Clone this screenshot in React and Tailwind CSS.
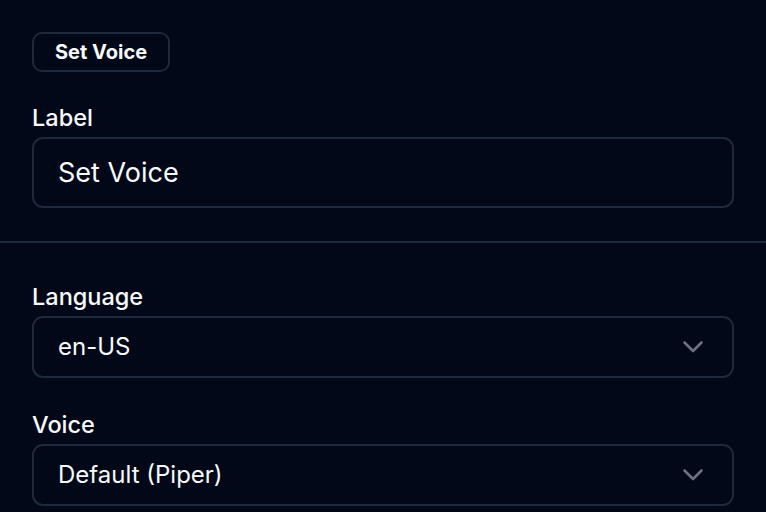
import React from 'react';

const Chevron = () => (
    <svg width="22" height="14" viewBox="0 0 22 14" fill="none" className="shrink-0">
        <path d="M2.5 2.5 11 11l8.5-8.5" stroke="#6b7280" strokeWidth="2.6" strokeLinecap="round" strokeLinejoin="round" />
    </svg>
);

function Field({ label, children, className = '' }) {
    return (
        <div className={className}>
            <div className="text-[23.5px] leading-[28px] font-medium text-[#f8fafc]">{label}</div>
            <div className="mt-[5px]">{children}</div>
        </div>
    );
}

function SelectBox({ value }) {
    return (
        <button className="w-full h-[62px] flex items-center justify-between pl-[24px] pr-[28px] border-2 border-[#1e293b] rounded-[11px] bg-transparent text-left">
            <span className="text-[24px] text-[#f8fafc]">{value}</span>
            <Chevron />
        </button>
    );
}

export default function App() {
    return (
        <div className="h-[512px] overflow-hidden bg-[#020817] pt-8" style={{ fontFamily: 'Inter, "Noto Sans", sans-serif' }}>
            <div className="px-8">
                <span className="inline-flex items-center h-[40px] px-[21px] border-2 border-[#1e293b] rounded-[10px] text-[20px] font-bold text-[#f8fafc]">
                    Set Voice
                </span>
                <Field label="Label" className="mt-[32px]">
                    <input
                        readOnly
                        value="Set Voice"
                        className="w-full h-[71px] pl-[24px] border-2 border-[#1e293b] rounded-[11px] bg-transparent text-[27px] text-[#f8fafc] outline-none"
                    />
                </Field>
            </div>
            <div className="h-[2px] bg-[#1e293b] mt-[33px]" />
            <div className="px-8">
                <Field label="Language" className="mt-[40px]">
                    <SelectBox value="en-US" />
                </Field>
                <Field label="Voice" className="mt-[33px]">
                    <SelectBox value="Default (Piper)" />
                </Field>
            </div>
        </div>
    );
}
